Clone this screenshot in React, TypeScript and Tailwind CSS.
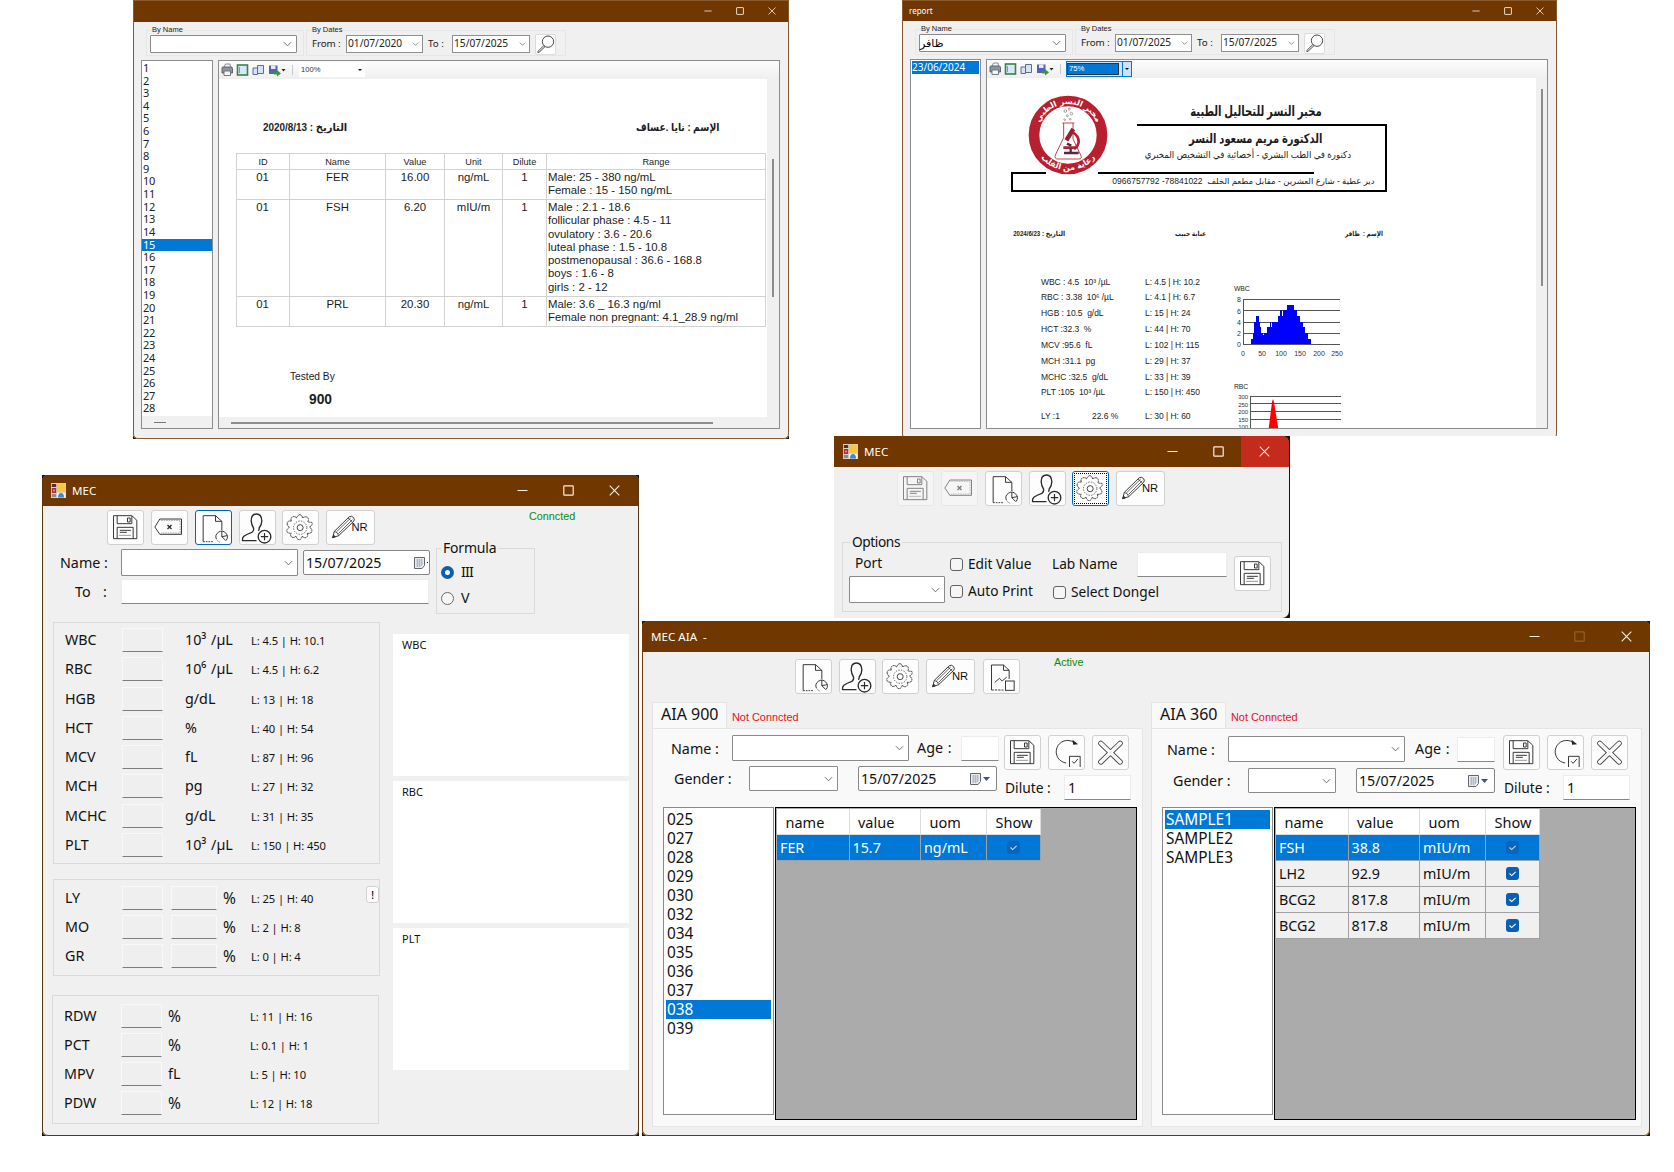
import type { ReactNode } from 'react';

const UI = "font-['Noto_Sans','DejaVu_Sans',sans-serif]";
const ARIAL = "font-['Liberation_Sans','DejaVu_Sans',sans-serif]";

/* ---------- window chrome ---------- */

function FormIcon() {
  return (
    <svg className="mr-[6px] h-[15px] w-[15px] shrink-0" viewBox="0 0 15 15">
      <rect x="0" y="0" width="15" height="15" fill="#d9d2c8" />
      <rect x="0.8" y="1" width="4.400" height="3" fill="#5a2f22" />
      <rect x="0.8" y="5" width="4.400" height="5" fill="#b3263a" />
      <path d="M3 6.500V8.500" stroke="#fff" strokeWidth="0.9" />
      <rect x="0.8" y="11" width="4.400" height="3" fill="#8b8b8b" />
      <rect x="6" y="0.5" width="8.500" height="8.500" fill="#f6c945" />
      <rect x="6" y="10" width="8.500" height="4.500" fill="#f1f1f1" />
      <path d="M7 14.500Q7 10 10 10Q13 10 13 14.500Z" fill="#3d86d8" />
    </svg>
  );
}

type BarProps = { title: string; small?: boolean; icon?: boolean; redClose?: boolean; dimMax?: boolean; height: string };

function TitleBar({ title, small, icon, redClose, dimMax, height }: BarProps) {
  const cell = small ? 'w-[32px]' : dimMax ? 'w-[45px]' : 'w-[46px]';
  const size = small ? 'h-[8px] w-[8px]' : 'h-[11px] w-[11px]';
  return (
    <div className={`flex shrink-0 items-center bg-[#703800] text-white ${height} ${UI}`}>
      <div className={`flex flex-1 items-center whitespace-pre ${small ? 'pl-[7px] text-[8px]' : 'pl-[9px] text-[11.6px]'}`}>
        {icon && <FormIcon />}
        <span>{title}</span>
      </div>
      <div className={`flex h-full items-center justify-center ${cell}`}>
        <svg className={size} viewBox="0 0 11 11">
          <path d="M0.5 5.5H10.5" stroke="#f6eee6" strokeWidth="1.1" />
        </svg>
      </div>
      <div className={`flex h-full items-center justify-center ${cell}`}>
        <svg className={size} viewBox="0 0 11 11">
          <rect x="0.8" y="0.8" width="9.4" height="9.4" rx="0.6" fill="none" stroke={dimMax ? '#93602f' : '#f6eee6'} strokeWidth="1.2" />
        </svg>
      </div>
      <div className={`flex h-full items-center justify-center ${small ? 'w-[33px] pr-px' : dimMax ? 'w-[48px]' : 'w-[48px] pl-px pr-[3px]'} ${redClose ? 'bg-[#c42b1c]' : ''}`}>
        <svg className={size} viewBox="0 0 11 11">
          <path d="M0.7 0.7L10.3 10.3M10.3 0.7L0.7 10.3" stroke="#f6eee6" strokeWidth="1.1" />
        </svg>
      </div>
    </div>
  );
}

/* ---------- controls ---------- */

function Chevron({ className = '' }: { className?: string }) {
  return (
    <svg className={`shrink-0 ${className}`} viewBox="0 0 10 6">
      <path d="M1 1L5 5L9 1" fill="none" stroke="#5c5c5c" strokeWidth="1" />
    </svg>
  );
}

function Combo({ className, children }: { className: string; children?: ReactNode }) {
  return (
    <div className={`flex shrink-0 items-center justify-between rounded-[1px] border border-[#8a8a8a] bg-white pr-[4px] ${className}`}>
      <span className="whitespace-nowrap">{children}</span>
      <Chevron className="h-[6px] w-[9px]" />
    </div>
  );
}

function SmallDate({ className, children }: { className: string; children: ReactNode }) {
  return (
    <div className={`flex h-[18px] shrink-0 items-center justify-between border border-[#8f8f8f] bg-white pl-px pr-[3px] text-[10.200px] ${className}`}>
      <span>{children}</span>
      <Chevron className="h-[4px] w-[7px]" />
    </div>
  );
}

function DateBox({ className, arrow = true }: { className: string; arrow?: boolean }) {
  return (
    <div className={`flex shrink-0 items-center rounded-[2px] border border-[#868686] bg-white pl-[2px] text-[14.2px] ${className}`}>
      <span className="flex-1">15/07/2025</span>
      <svg className="h-[12px] w-[11px]" viewBox="0 0 11 12">
        <path d="M0.5 0.5H10.5V8.5L8 11.5H0.5Z" fill="#e9ebf0" stroke="#62656e" />
        <path d="M2 3H9M2 5H9M2 7H9M2 9H7M3.5 2V10M5.5 2V10M7.5 2V9" stroke="#a5aab8" strokeWidth="0.7" />
      </svg>
      {arrow ? (
        <svg className="ml-[2px] mr-[6px] h-[4px] w-[7px]" viewBox="0 0 7 4">
          <path d="M0 0H7L3.5 4Z" fill="#3c5877" />
        </svg>
      ) : (
        <span className="ml-[2px] mr-px h-px w-px bg-black" />
      )}
    </div>
  );
}

function TextInput({ className, children }: { className: string; children?: ReactNode }) {
  return (
    <div className={`flex shrink-0 items-center border border-[#ececec] border-b-[#868686] bg-white ${className}`}>{children}</div>
  );
}

function CheckBox() {
  return <span className="h-[13px] w-[13px] shrink-0 rounded-[3px] border border-[#626262] bg-[#f6f6f6]" />;
}

type GlyphName = 'save' | 'back' | 'doc' | 'user' | 'gear' | 'pencil' | 'report' | 'redo' | 'close';

const gearPath =
  'M52 14 q7 1 8 10 q8 -6 15 -2 q5 6 1 13 q3 2 12 2 q4 8 -7 14 q10 7 6 16 q-8 5 -13 2 q4 8 -2 13 q-7 4 -13 -4 q-1 10 -9 11 q-8 -1 -9 -11 q-7 7 -14 3 q-5 -6 -1 -12 q-8 2 -12 -3 q-4 -8 7 -14 q-10 -7 -6 -16 q5 -5 12 -2 q-4 -8 2 -13 q7 -4 14 3 q2 -9 9 -10Z';

function Glyph({ name }: { name: GlyphName }) {
  switch (name) {
    case 'save':
      return (
        <g>
          <path d="M18 17H73L88 31V86H18Z" />
          <path d="M29 17V41H73V18M60 24H68V36H60ZM29 86V52H77V86" />
          <path d="M37 61H70M37 67H58" />
          <path d="M36 76H72" strokeDasharray="3 3" />
        </g>
      );
    case 'back':
      return (
        <g>
          <path d="M10 51L25 27H90V73H25Z" />
          <path d="M28 31H86V69H28" strokeDasharray="2 3" strokeWidth="2" />
          <path d="M48 45L60 57M60 45L48 57" strokeWidth="4" />
        </g>
      );
    case 'doc':
      return (
        <g>
          <path d="M23 95V17H60L79 34V60M60 17V34H79" />
          <path d="M23 95H54" strokeDasharray="5 3" />
          <path d="M63 88A17 17 0 1 1 92 91" />
          <path d="M79 63V80L91 92M79 80L95 77" />
          <path d="M66 92L72 96" strokeDasharray="3 2" />
        </g>
      );
    case 'user':
      return (
        <g strokeWidth="4">
          <path d="M56 62Q60 60 59 54Q67 44 67 32Q66 12 51 12Q35 12 35 32Q36 46 42 54Q44 63 37 67Q22 72 13 79Q8 84 9 92H51" />
          <circle cx="75" cy="80" r="19" />
          <path d="M75 69V91M64 80H86" strokeWidth="3.5" />
        </g>
      );
    case 'gear':
      return (
        <g strokeWidth="2.6">
          <path d={gearPath} strokeDasharray="6 1.5" />
          <circle cx="53" cy="53" r="20" strokeDasharray="4 4" strokeWidth="2.2" />
          <circle cx="53" cy="53" r="9" />
        </g>
      );
    case 'pencil':
      return (
        <g>
          <path d="M20 83L25 64L70 20Q77 16 83 23Q87 29 83 34L38 77Z" />
          <path d="M25 64Q35 66 38 77M31 66L74 24M37 71L79 29M66 24L80 37" strokeWidth="2.2" />
          <path d="M20 83L23 76L28 80Z" fill="#333" />
        </g>
      );
    case 'report':
      return (
        <g>
          <path d="M24 93V18H60L77 34V60M60 18V34H77" />
          <path d="M24 93H60" strokeDasharray="7 3" />
          <path d="M34 70L48 58L56 66L70 54" />
          <rect x="66" y="66" width="26" height="28" />
        </g>
      );
    case 'redo':
      return (
        <g>
          <path d="M53 84A34 34 0 1 1 76 22" />
          <path d="M72 14L89 28L74 29Z" fill="#222" stroke="none" />
          <path d="M63 96V64H95V96" />
          <path d="M71 79L77 85L88 72" />
        </g>
      );
    case 'close':
      return (
        <g>
          <path d="M25 25L83 81M83 25L25 81" stroke="#4a4a4a" strokeWidth="16" strokeLinecap="round" />
          <path d="M25 25L83 81M83 25L25 81" stroke="#fdfdfd" strokeWidth="10.5" strokeLinecap="round" />
          <path d="M27 27L81 79M81 27L27 79" stroke="#888" strokeWidth="1.2" strokeDasharray="2 4" />
        </g>
      );
  }
}

type ToolProps = { name: GlyphName; className?: string; focused?: boolean; active?: boolean; disabled?: boolean };

function Tool({ name, className = '', focused, active, disabled }: ToolProps) {
  const wide = name === 'pencil';
  const edge = focused || active ? 'border-[#0067b8]' : disabled ? 'border-[#e8e8e8]' : 'border-[#d0d0d0]';
  return (
    <div
      className={`relative h-[35px] shrink-0 overflow-hidden rounded-[3px] border ${edge} ${disabled ? 'bg-[#f5f5f5]' : 'bg-[#fdfdfd]'} ${wide ? 'w-[49px]' : 'w-[37px]'} ${className}`}
    >
      {focused && <span className="absolute inset-[1px] border border-dotted border-black" />}
      <svg
        className={`-ml-px -mt-px h-[35px] ${wide ? 'w-[49px]' : 'w-[37px]'} ${disabled ? 'opacity-60' : ''}`}
        viewBox={wide ? '0 0 147 105' : '0 0 108 105'}
        fill="none"
        stroke="#2b2b2b"
        strokeWidth="2.8"
      >
        <Glyph name={name} />
      </svg>
      {wide && <span className={`absolute left-[25px] top-[9px] text-[11.2px] leading-[15px] ${ARIAL}`}>NR</span>}
    </div>
  );
}

/* ---------- report windows ---------- */

function ViewerIcons() {
  return (
    <svg className="h-[14px] w-[68px] shrink-0" viewBox="0 0 68 14">
      <path d="M3 4L4.5 1H9L9.500 4" fill="#f4f6f8" stroke="#7d838c" strokeWidth="0.9" />
      <path d="M1 5Q1 4 2 4H10Q11.500 4 11.500 5.500V10H1Z" fill="#8f959e" stroke="#555b64" strokeWidth="0.9" />
      <path d="M3 8H9.500V12.500H3Z" fill="#f4f6f8" stroke="#666c75" strokeWidth="0.9" />
      <rect x="16.500" y="2" width="10" height="10" fill="#d5e8f7" stroke="#3f7d4e" strokeWidth="1.6" />
      <path d="M18.500 4V10" stroke="#8a9aa8" strokeWidth="1" />
      <path d="M32 5H36.500V11.500H32ZM36.500 2.500H42.500V10.500H36.500Z" fill="#d5e3f5" stroke="#5f6c8c" strokeWidth="1" />
      <path d="M48 2.500H56.500V11H48Z" fill="#5561b5" />
      <rect x="50" y="2.500" width="4.500" height="3.500" fill="#e6e9f8" />
      <path d="M53 9H56V7L60 10.500L56 13.500V11.500H53Z" fill="#2e9e3a" />
      <path d="M60.500 6H64.500L62.500 8.500Z" fill="#222" />
    </svg>
  );
}

type ReportProps = {
  place: string;
  title: string;
  bar: string;
  name: string;
  from: string;
  list: ReactNode;
  zoom: ReactNode;
  children: ReactNode;
};

function ReportWindow({ place, title, bar, name, from, list, zoom, children }: ReportProps) {
  return (
    <div className={`absolute overflow-hidden bg-[#1c1208] ${place}`}>
      <div className="flex h-[439px] flex-col overflow-hidden rounded-b-[5px] bg-[#f0f0f0] outline outline-1 -outline-offset-1 outline-[#8a5a30]">
        <TitleBar title={title} small height={bar} />
        <div className={`flex h-[38px] shrink-0 pl-[13px] pt-[4px] ${UI}`}>
          <fieldset className="h-[30px] w-[158px] shrink-0 border border-[#e6e6e6] pl-[3px]">
            <legend className={`ml-[2px] text-[7.5px] leading-[8px] text-[#222] ${ARIAL}`}>By Name</legend>
            <Combo className="mt-px h-[18px] w-[147px] text-[11px] leading-[14px]">{name}</Combo>
          </fieldset>
          <fieldset className="ml-[2px] h-[30px] w-[260px] shrink-0 border border-[#e6e6e6] pl-[5px]">
            <legend className={`text-[7.5px] leading-[8px] text-[#222] ${ARIAL}`}>By Dates</legend>
            <div className="mt-px flex h-[18px] items-center text-[9.8px] text-[#222]">
              <span className="w-[34px] shrink-0 tracking-[-0.1px]">From :</span>
              <SmallDate className="w-[77px]">{from}</SmallDate>
              <span className="ml-[5px] w-[24px] shrink-0">To :</span>
              <SmallDate className="w-[78px]">15/07/2025</SmallDate>
              <div className="ml-[5px] h-[21px] w-[21px] shrink-0 rounded-[2px] border border-[#dcdcdc] bg-[#fdfdfd]">
                <svg className="h-[19px] w-[19px]" viewBox="0 0 57 57" fill="none" stroke="#4a4a4a" strokeWidth="3">
                  <circle cx="36" cy="20" r="17" />
                  <path d="M24 31L6 49Q3 54 9 52L28 34" />
                </svg>
              </div>
            </div>
          </fieldset>
        </div>
        <div className="flex min-h-0 flex-1 pb-[10px] pl-[8px] pr-[9px]">
          {list}
          <div className="ml-[5px] flex min-w-0 flex-1 flex-col border border-[#8c8c8c] bg-[#f0f0f0]">
            <div className="flex h-[18px] shrink-0 items-center bg-gradient-to-b from-[#fcfcfc] to-[#efefef] pl-[2px]">
              <ViewerIcons />
              <span className="ml-[3px] h-[10px] w-px bg-[#c9c9c9]" />
              {zoom}
            </div>
            {children}
          </div>
        </div>
      </div>
    </div>
  );
}

const results = [
  { name: 'FER', value: '16.00', unit: 'ng/mL', h: 'h-[30px]', range: ['Male: 25 - 380 ng/mL', 'Female : 15 - 150 ng/mL'] },
  {
    name: 'FSH',
    value: '6.20',
    unit: 'mIU/m',
    h: 'h-[97px]',
    range: [
      'Male : 2.1 - 18.6',
      'follicular phase : 4.5 - 11',
      'ovulatory : 3.6 - 20.6',
      'luteal phase : 1.5 - 10.8',
      'postmenopausal : 36.6 - 168.8',
      'boys : 1.6 - 8',
      'girls : 2 - 12',
    ],
  },
  { name: 'PRL', value: '20.30', unit: 'ng/mL', h: 'h-[30px]', range: ['Male: 3.6 _ 16.3 ng/ml', 'Female non pregnant: 4.1_28.9 ng/ml'] },
];

const tableCols = 'grid grid-cols-[53px_96px_59px_58px_44px_219px]';
const tableCell = 'border-r border-[#d2d2d2] text-center';

function HormoneReport() {
  return (
    <div className={`flex min-h-0 flex-1 ${ARIAL}`}>
      <div className="flex min-w-0 flex-1 flex-col">
        <div className="h-[338px] bg-white pl-[17px] text-[#1c1c1c]">
          <div className="flex h-[74px] items-center justify-between pl-[27px] pr-[48px] pt-[23px] text-[11px] font-bold">
            <span dir="rtl" className="origin-left scale-x-[0.9] whitespace-nowrap">التاريخ : 2020/8/13</span>
            <span dir="rtl" className="origin-right scale-x-[0.84] whitespace-nowrap">الإسم : نايا .عساف</span>
          </div>
          <div className="w-[530px] border-l border-t border-[#d2d2d2]">
            <div className={`${tableCols} h-[16px] border-b border-[#d2d2d2] text-[9.2px] leading-[16px]`}>
              {['ID', 'Name', 'Value', 'Unit', 'Dilute', 'Range'].map((h) => (
                <div key={h} className={tableCell}>{h}</div>
              ))}
            </div>
            {results.map((r) => (
              <div key={r.name} className={`${tableCols} ${r.h} border-b border-[#d2d2d2] text-[11.400px] leading-[13.300px]`}>
                <div className={`${tableCell} -ml-px pt-px`}>01</div>
                <div className={`${tableCell} pt-px`}>{r.name}</div>
                <div className={`${tableCell} pt-px`}>{r.value}</div>
                <div className={`${tableCell} pt-px`}>{r.unit}</div>
                <div className={`${tableCell} pt-px`}>1</div>
                <div className="whitespace-nowrap border-r border-[#d2d2d2] pl-px pt-px">
                  {r.range.map((line) => (
                    <div key={line}>{line}</div>
                  ))}
                </div>
              </div>
            ))}
          </div>
          <div className="ml-[54px] mt-[43px] text-[10.200px] leading-[14px]">Tested By</div>
          <div className="ml-[73px] mt-[8px] text-[13.800px] font-bold leading-[16px]">900</div>
        </div>
        <div className="flex flex-1 items-center pl-[12px]">
          <span className="h-[2px] w-[482px] bg-[#8c8c8c]" />
        </div>
      </div>
      <div className="w-[12px] shrink-0 pl-[5px] pt-[80px]">
        <div className="h-[138px] w-[2px] bg-[#8c8c8c]" />
      </div>
    </div>
  );
}

function Logo() {
  return (
    <svg className="h-[80px] w-[80px] shrink-0" viewBox="0 0 240 240">
      <defs>
        <path id="ringTop" d="M27 120A93 93 0 0 1 213 120" />
        <path id="ringBottom" d="M14 120A106 106 0 0 0 226 120" />
      </defs>
      <circle cx="120" cy="120" r="102" fill="#fff" stroke="#b8202f" strokeWidth="32" />
      <text className="font-['DejaVu_Sans']" fontSize="24" fontWeight="bold" fill="#fff" textAnchor="middle">
        <textPath href="#ringTop" startOffset="50%">مخبر النسر الطبي</textPath>
      </text>
      <text className="font-['DejaVu_Sans']" fontSize="24" fontWeight="bold" fill="#fff" textAnchor="middle">
        <textPath href="#ringBottom" startOffset="50%">رعاية من القلب</textPath>
      </text>
      <path d="M103 84H139M107 84V128L82 180Q78 192 90 192H152Q164 192 158 180L135 132V84" fill="none" stroke="#c9404c" strokeWidth="3" />
      <g fill="none" stroke="#777" strokeWidth="2">
        <circle cx="112" cy="48" r="4" />
        <circle cx="124" cy="42" r="3" />
        <circle cx="130" cy="56" r="4" />
        <circle cx="118" cy="62" r="3" />
        <circle cx="110" cy="74" r="2.500" />
        <circle cx="127" cy="73" r="2.500" />
      </g>
      <path d="M115 136L136 102" stroke="#8f2430" strokeWidth="13" />
      <path d="M134 112Q152 122 152 140Q151 154 138 162M106 158H142" fill="none" stroke="#b8202f" strokeWidth="8" />
      <path d="M117 146L130 152M108 174H152M128 160V174" fill="none" stroke="#4d2f44" strokeWidth="7" />
    </svg>
  );
}

const cbc: [string, string][] = [
  ['WBC : 4.5  10³ /µL', 'L: 4.5 | H: 10.2'],
  ['RBC : 3.38  10⁶ /µL', 'L: 4.1 | H: 6.7'],
  ['HGB : 10.5  g/dL', 'L: 15 | H: 24'],
  ['HCT :32.3  %', 'L: 44 | H: 70'],
  ['MCV :95.6  fL', 'L: 102 | H: 115'],
  ['MCH :31.1  pg', 'L: 29 | H: 37'],
  ['MCHC :32.5  g/dL', 'L: 33 | H: 39'],
  ['PLT :105  10³ /µL', 'L: 150 | H: 450'],
];

function WbcChart() {
  return (
    <svg className="h-[74px] w-[120px]" viewBox="0 0 120 74">
      <g stroke="#555" strokeWidth="1">
        {[9.5, 20.5, 32.5, 43.5].map((y) => (
          <path key={y} d={`M10 ${y}H107`} />
        ))}
        <path d="M10.500 9V55M10 54.500H107" />
      </g>
      <path
        d="M18 54V49H20V43H21V32H23V26H25V26H26V32H27V37H28V43H30V45H31V43H34V37H37V32H38V37H39V32H45V26H47V20H49V26H50V20H54V15H61V20H64V26H67V32H70V37H72V43H75V49H78V54Z"
        fill="#00f"
      />
      <g className="font-['Liberation_Sans']" fontSize="7" fill="#333" textAnchor="middle">
        <text x="6" y="12">8</text>
        <text x="6" y="23.500">6</text>
        <text x="6" y="35">4</text>
        <text x="6" y="46">2</text>
        <text x="6" y="57">0</text>
        <text x="10" y="65.500">0</text>
        <text x="29" y="65.500">50</text>
        <text x="48" y="65.500">100</text>
        <text x="67" y="65.500">150</text>
        <text x="86" y="65.500">200</text>
        <text x="104" y="65.500">250</text>
      </g>
    </svg>
  );
}

function RbcChart() {
  return (
    <svg className="-mt-px h-[40px] w-[120px]" viewBox="0 0 120 40">
      <g stroke="#555" strokeWidth="1">
        {[6.5, 13.500, 21.500, 29.500].map((y) => (
          <path key={y} d={`M17 ${y}H108`} />
        ))}
        <path d="M17.500 6V40" />
      </g>
      <path d="M35.500 40L39 12L40 9L41 12L45.500 40Z" fill="#f00" />
      <g className="font-['Liberation_Sans']" fontSize="6" fill="#333" textAnchor="end">
        <text x="15" y="9">300</text>
        <text x="15" y="16.500">250</text>
        <text x="15" y="24">200</text>
        <text x="15" y="32">150</text>
        <text x="15" y="39">100</text>
      </g>
    </svg>
  );
}

function BloodReport() {
  return (
    <div className={`flex min-h-0 flex-1 overflow-hidden ${ARIAL}`}>
      <div className="min-w-0 flex-1 overflow-hidden bg-white pl-px text-[#1c1c1c]">
        <div className="relative h-[113px]">
          <div className="ml-[22.500px] flex h-[113px] w-[376px] pt-[16px]">
            <div className="h-full w-full">
              <div dir="rtl" className="h-[30px] pr-[65px] pt-[7px] text-[14px] font-bold leading-[20px]">
                <span className="inline-block origin-right scale-x-[0.72] whitespace-nowrap">مخبر النسر للتحاليل الطبية</span>
              </div>
              <div className="ml-[126px] h-[48px] border-r-2 border-t-2 border-black">
                <div dir="rtl" className="whitespace-nowrap pr-[62px] pt-[4px] text-[13px] font-bold leading-[18px]">
                  <span className="inline-block origin-right scale-x-[0.765]">الدكتورة مريم مسعود النسر</span>
                </div>
                <div dir="rtl" className="whitespace-nowrap pr-[34px] text-[9.500px] leading-[14px]">
                  <span className="inline-block origin-right scale-x-[0.905]">دكتورة في الطب البشري - أخصائية في التشخيص المخبري</span>
                </div>
              </div>
              <div className="flex h-[2px] border-r-2 border-black">
                <span className="w-[35px] bg-black" />
                <span className="ml-[52px] w-[216px] bg-black" />
              </div>
              <div
                dir="rtl"
                className="h-[18px] whitespace-nowrap border-x-2 border-b-2 border-black pr-[10px] text-[8.500px] leading-[14px]"
              >
                دير عطية - شارع العشرين - مقابل مطعم الخلف&nbsp; 78841022- 0966757792
              </div>
            </div>
          </div>
          <div className="absolute left-[40px] top-[17px]">
            <Logo />
          </div>
        </div>
        <div className="mt-[35px] flex h-[16px] items-center text-[7px] font-bold">
          <span dir="rtl" className="ml-[24px] w-[53px] origin-right scale-x-[0.87] whitespace-nowrap">التاريخ : 2024/6/23</span>
          <span dir="rtl" className="ml-[109px] w-[32px] origin-right scale-x-[0.83] whitespace-nowrap">عناية حبيب</span>
          <span dir="rtl" className="ml-[139px] w-[38px] origin-right scale-x-[0.82] whitespace-pre">الإسم :  ظافر</span>
        </div>
        <div className="mt-[31px] flex text-[8.500px] tracking-[-0.05px]">
          <div className="ml-[53px] mt-px w-[190px] shrink-0">
            {cbc.map(([value, range]) => (
              <div key={value} className="flex h-[15.850px] items-center whitespace-pre">
                <span className="w-[104px]">{value}</span>
                <span>{range}</span>
              </div>
            ))}
            <div className="mt-[8px] flex h-[16px] items-center">
              <span className="w-[51px]">LY :1</span>
              <span className="w-[53px]">22.6 %</span>
              <span>L: 30 | H: 60</span>
            </div>
          </div>
          <div className="ml-[2px] mt-[12px]">
            <div className="pl-[1px] text-[6.800px] leading-[8px]">WBC</div>
            <div className="-mt-[3px]">
              <WbcChart />
            </div>
            <div className="mt-[19px] pl-[1px] text-[6.800px] leading-[8px]">RBC</div>
            <RbcChart />
          </div>
        </div>
      </div>
      <div className="w-[11px] shrink-0 pl-[5px] pt-[11px]">
        <div className="h-[197px] w-[2px] bg-[#8c8c8c]" />
      </div>
    </div>
  );
}

/* ---------- hematology window ---------- */

function ReadOnly({ className }: { className: string }) {
  return (
    <span className={`h-[24px] shrink-0 border border-[#f8f8f8] border-b-[#7d7d7d] bg-[#efefef] ${className}`} />
  );
}

const group1 = [
  ['WBC', '10³ /µL', 'L: 4.5 | H: 10.1'],
  ['RBC', '10⁶ /µL', 'L: 4.5 | H: 6.2'],
  ['HGB', 'g/dL', 'L: 13 | H: 18'],
  ['HCT', '%', 'L: 40 | H: 54'],
  ['MCV', 'fL', 'L: 87 | H: 96'],
  ['MCH', 'pg', 'L: 27 | H: 32'],
  ['MCHC', 'g/dL', 'L: 31 | H: 35'],
  ['PLT', '10³ /µL', 'L: 150 | H: 450'],
];
const group2 = [
  ['LY', 'L: 25 | H: 40'],
  ['MO', 'L: 2 | H: 8'],
  ['GR', 'L: 0 | H: 4'],
];
const group3 = [
  ['RDW', '%', 'L: 11 | H: 16'],
  ['PCT', '%', 'L: 0.1 | H: 1'],
  ['MPV', 'fL', 'L: 5 | H: 10'],
  ['PDW', '%', 'L: 12 | H: 18'],
];

const rangeText = 'whitespace-nowrap pt-[2px] text-[11.200px] tracking-[-0.1px]';

function HematologyWindow() {
  return (
    <div className="absolute left-[42px] top-[475px] h-[661px] w-[597px] overflow-hidden bg-[#1c1208]">
      <div className={`flex h-full flex-col overflow-hidden rounded-[6px] bg-[#f0f0f0] text-[14.300px] leading-[20px] text-[#111] outline outline-1 -outline-offset-1 outline-[#5a3510] ${UI}`}>
        <TitleBar title="MEC" icon height="h-[31px]" />
        <div className="flex h-[116px] shrink-0">
          <div className="w-[394px] shrink-0 pt-[4px]">
            <div className="flex pl-[64.500px]">
              <Tool name="save" />
              <Tool name="back" className="ml-[7px]" />
              <Tool name="doc" active className="ml-[7px]" />
              <Tool name="user" className="ml-[7px]" />
              <Tool name="gear" className="ml-[6px]" />
              <Tool name="pencil" className="ml-[7px]" />
            </div>
            <div className="mt-[4px] flex h-[27px] items-center">
              <span className="ml-[18px] w-[61px] whitespace-nowrap pt-px">Name :</span>
              <Combo className="h-[27px] w-[177px]" />
              <DateBox arrow={false} className="ml-[5px] h-[25px] w-[127px]" />
            </div>
            <div className="mt-[3px] flex h-[25px] items-center">
              <span className="ml-[33px] w-[46px] whitespace-pre [word-spacing:2.5px]">To  :</span>
              <TextInput className="h-[25px] w-[308px]" />
            </div>
          </div>
          <div className="pt-[2px]">
            <div className={`ml-[93px] h-[16px] text-[10.800px] leading-[16px] text-[#0a8a0a] ${ARIAL}`}>Conncted</div>
            <fieldset className="mt-[14px] h-[76px] w-[99px] border border-[#dadada] pl-[4px]">
              <legend className="px-[2px] text-[14px] leading-[20px] tracking-[-0.200px]">Formula</legend>
              <div className="mt-[4px] flex h-[20px] items-center">
                <span className="h-[13px] w-[13px] rounded-full border-4 border-[#0a5fb4] bg-white" />
                <span className="ml-[7px] pb-[1px] tracking-[-0.800px]">III</span>
              </div>
              <div className="mt-[6px] flex h-[20px] items-center">
                <span className="h-[13px] w-[13px] rounded-full border border-[#6b6b6b] bg-[#f6f6f6]" />
                <span className="ml-[7px]">V</span>
              </div>
            </fieldset>
          </div>
        </div>
        <div className="flex">
          <div className="w-[351px] shrink-0 pl-[11px]">
            <div className="h-[242px] w-[327px] border border-[#dadada] pt-[2.500px]">
              {group1.map(([n, u, r]) => (
                <div key={n} className="flex h-[29.250px] items-center">
                  <span className="ml-[11px] w-[57px] shrink-0">{n}</span>
                  <ReadOnly className="w-[41px]" />
                  <span className="ml-[22px] w-[66px] shrink-0 whitespace-nowrap [word-spacing:1px]">{u}</span>
                  <span className={rangeText}>{r}</span>
                </div>
              ))}
            </div>
            <div className="relative mt-[15px] h-[97px] w-[327px] border border-[#dadada] pt-[3px]">
              {group2.map(([n, r]) => (
                <div key={n} className="flex h-[29px] items-center">
                  <span className="ml-[11px] w-[57px] shrink-0">{n}</span>
                  <ReadOnly className="w-[41px]" />
                  <ReadOnly className="ml-[8px] w-[46px]" />
                  <span className="ml-[6px] w-[28px] shrink-0 text-[15.500px]">%</span>
                  <span className={rangeText}>{r}</span>
                </div>
              ))}
              <span className="absolute right-0 top-[6px] flex h-[17px] w-[13px] items-center justify-center rounded-[3px] border border-[#cfcfcf] bg-[#fdfdfd] text-[10px] font-medium text-black">
                !
              </span>
            </div>
            <div className="-ml-px mt-[19px] h-[129px] w-[327px] border border-[#dadada] pt-[5px]">
              {group3.map(([n, u, r]) => (
                <div key={n} className="flex h-[29.200px] items-center">
                  <span className="ml-[11px] w-[57px] shrink-0">{n}</span>
                  <ReadOnly className="w-[41px]" />
                  <span className={`ml-[6px] w-[82px] shrink-0 ${u === '%' ? 'text-[15.500px]' : ''}`}>{u}</span>
                  <span className={rangeText}>{r}</span>
                </div>
              ))}
            </div>
          </div>
          <div className="flex w-[236px] flex-col gap-[5px] pt-[12px]">
            {['WBC', 'RBC', 'PLT'].map((n) => (
              <div key={n} className="h-[142px] bg-white pl-[9px] pt-[3px] text-[11px] leading-[16px]">{n}</div>
            ))}
          </div>
        </div>
      </div>
    </div>
  );
}

/* ---------- options window ---------- */

function OptionsWindow() {
  return (
    <div className="absolute left-[834px] top-[436px] h-[182px] w-[456px] overflow-hidden bg-[#1c1208]">
      <div className={`flex h-full w-[455px] flex-col overflow-hidden rounded-r-[7px] bg-[#f0f0f0] text-[13.700px] leading-[20px] text-[#111] ${UI}`}>
        <TitleBar title="MEC" icon redClose height="h-[31px]" />
        <div className="flex pl-[63px] pt-[4px]">
          <Tool name="save" disabled />
          <Tool name="back" disabled className="ml-[7px]" />
          <Tool name="doc" className="ml-[7px]" />
          <Tool name="user" className="ml-[7px]" />
          <Tool name="gear" focused className="ml-[6px]" />
          <Tool name="pencil" className="ml-[7px]" />
        </div>
        <fieldset className="ml-[8px] mt-[26px] h-[80px] w-[440px] border border-[#dadada]">
          <legend className="ml-[7px] px-[2px] tracking-[-0.400px]">Options</legend>
          <div className="flex">
            <div className="ml-[6px] w-[96px]">
              <div className="h-[24px] pl-[6px] pt-px">Port</div>
              <Combo className="h-[27px] w-[96px]" />
            </div>
            <div className="ml-[5px] w-[102px] whitespace-nowrap">
              <div className="flex h-[24px] items-center gap-[5px]">
                <CheckBox />
                Edit Value
              </div>
              <div className="mt-[3px] flex h-[24px] items-center gap-[5px]">
                <CheckBox />
                Auto Print
              </div>
            </div>
            <div className="w-[182px] whitespace-nowrap">
              <div className="flex h-[24px] items-center">
                <span className="w-[85px]">Lab Name</span>
                <TextInput className="h-[25px] w-[90px]" />
              </div>
              <div className="mt-[4px] flex h-[24px] items-center gap-[5px] pl-px">
                <CheckBox />
                Select Dongel
              </div>
            </div>
            <Tool name="save" className="mt-[4px]" />
          </div>
        </fieldset>
      </div>
    </div>
  );
}

/* ---------- AIA window ---------- */

type Row = [string, string, string];
type PanelProps = {
  tab: string;
  tabClass: string;
  nameRow: string;
  nameGap: string;
  ageLabel: string;
  ageGap: string;
  genderRow: string;
  genderGap: string;
  dateGap: string;
  side: string;
  bodyClass: string;
  items: string[];
  selected: string;
  rows: Row[];
};

function Tick({ muted }: { muted?: boolean }) {
  return (
    <svg className="h-[13px] w-[13px]" viewBox="0 0 13 13">
      <rect width="13" height="13" rx="3" fill={muted ? '#0a66bd' : '#0a5fb4'} />
      <path d="M3.500 6.500L5.700 8.600L9.600 4.800" fill="none" stroke={muted ? '#b9dcf8' : '#fff'} strokeWidth="1.100" />
    </svg>
  );
}

function AnalyzerPanel(p: PanelProps) {
  return (
    <div className="flex w-[491px] shrink-0 flex-col">
      <div className="flex h-[26px] shrink-0 items-end">
        <div className={`-mb-px flex h-[27px] items-center border border-b-0 border-[#e5e5e5] bg-[#f9f9f9] pb-[4px] pl-[8px] text-[16px] ${p.tabClass}`}>{p.tab}</div>
        <span className={`pb-[2px] pl-[5px] text-[10.900px] leading-[18px] text-[#e8101c] ${ARIAL}`}>Not Conncted</span>
      </div>
      <div className="h-[399px] border border-[#e5e5e5] bg-[#f9f9f9]">
        <div className="flex h-[78px]">
          <div className={`shrink-0 ${p.side}`}>
            <div className={`flex h-[26px] items-center ${p.nameRow}`}>
              <span className="w-[61px] shrink-0 pt-[2px]">Name :</span>
              <Combo className={`h-[26px] ${p.nameGap}`} />
              <span className={`shrink-0 whitespace-nowrap [word-spacing:1px] ${p.ageLabel}`}>Age :</span>
              <TextInput className={`h-[25px] ${p.ageGap}`} />
            </div>
            <div className={`flex h-[25px] items-center ${p.genderRow}`}>
              <span className="w-[75px] shrink-0">Gender :</span>
              <Combo className={`h-[25px] ${p.genderGap}`} />
              <DateBox className={`h-[25px] ${p.dateGap}`} />
            </div>
          </div>
          <div className="pt-[6px]">
            <div className="flex gap-[7px]">
              <Tool name="save" />
              <Tool name="redo" />
              <Tool name="close" />
            </div>
            <div className="mt-[5px] flex h-[25px] items-center">
              <span className="w-[60px] whitespace-nowrap pl-px text-[13.800px]">Dilute :</span>
              <TextInput className="h-[25px] w-[67px] pl-[3px]">1</TextInput>
            </div>
          </div>
        </div>
        <div className={`flex ${p.bodyClass}`}>
          <div className="h-[308px] w-[111px] shrink-0 border border-[#8a8a8a] bg-white p-[2px] text-[15.400px] leading-[19px]">
            {p.items.map((it) => (
              <div key={it} className={`h-[19px] pl-[1px] ${it === p.selected ? 'bg-[#0078d7] text-white' : ''}`}>{it}</div>
            ))}
          </div>
          <div className="ml-px h-[313px] w-[362px] shrink-0 border border-black bg-[#ababab] p-px">
            <div className="grid w-[265px] grid-cols-[72.500px_71.500px_66px_54px]">
              {['name', 'value', 'uom', 'Show'].map((h) => (
                <div key={h} className="h-[26px] border-b border-r border-[#dcdcdc] bg-white pl-[8.500px] pt-[3px] text-[14.500px]">{h}</div>
              ))}
              {p.rows.flatMap((r, i) => {
                const tone = i === 0 ? 'bg-[#0078d7] text-white' : 'bg-[#f0f0f0]';
                return [
                  ...r.map((c, j) => (
                    <div key={`${i}-${j}`} className={`h-[26px] border-b border-r border-[#a0a0a0] pl-[3px] pt-[2.500px] ${tone}`}>{c}</div>
                  )),
                  <div key={`${i}-t`} className={`flex h-[26px] items-center justify-center border-b border-r border-[#a0a0a0] ${tone}`}>
                    <Tick muted={i === 0} />
                  </div>,
                ];
              })}
            </div>
          </div>
        </div>
      </div>
    </div>
  );
}

function AnalyzerWindow() {
  return (
    <div className="absolute left-[642px] top-[621px] h-[515px] w-[1008px] overflow-hidden bg-[#1c1208]">
      <div className={`flex h-full flex-col overflow-hidden rounded-[6px] bg-[#f0f0f0] text-[14.300px] leading-[20px] text-[#111] outline outline-1 -outline-offset-1 outline-[#703800] ${UI}`}>
        <TitleBar title="MEC AIA  -" dimMax height="h-[31px]" />
        <div className="flex h-[50px] shrink-0 pl-[153px] pt-[7px]">
          <Tool name="doc" />
          <Tool name="user" className="ml-[7px]" />
          <Tool name="gear" className="ml-[6px]" />
          <Tool name="pencil" className="ml-[7px]" />
          <Tool name="report" className="ml-[8px]" />
          <span className={`ml-[34px] mt-[-5px] text-[10.800px] leading-[16px] text-[#0a8a0a] ${ARIAL}`}>Active</span>
        </div>
        <div className="flex gap-[8px] pl-[10px]">
          <AnalyzerPanel
            tab="AIA 900"
            tabClass="w-[75px]"
            side="w-[351px]"
            nameRow="mt-[6px] pl-[18px]"
            nameGap="w-[177px]"
            ageLabel="ml-[8px] w-[44px]"
            ageGap="w-[38px]"
            genderRow="mt-[5px] pl-[21px]"
            genderGap="w-[89px]"
            dateGap="ml-[20px] w-[139px]"
            bodyClass="pl-[10px]"
            items={['025', '027', '028', '029', '030', '032', '034', '035', '036', '037', '038', '039']}
            selected="038"
            rows={[['FER', '15.7', 'ng/mL']]}
          />
          <AnalyzerPanel
            tab="AIA 360"
            tabClass="w-[75px]"
            side="w-[351px]"
            nameRow="mt-[7px] pl-[15px]"
            nameGap="w-[177px]"
            ageLabel="ml-[10px] w-[42px]"
            ageGap="w-[38px]"
            genderRow="mt-[6px] pl-[21px]"
            genderGap="w-[88px]"
            dateGap="ml-[20px] w-[139px]"
            bodyClass="pl-[10px]"
            items={['SAMPLE1', 'SAMPLE2', 'SAMPLE3']}
            selected="SAMPLE1"
            rows={[
              ['FSH', '38.8', 'mIU/m'],
              ['LH2', '92.9', 'mIU/m'],
              ['BCG2', '817.8', 'mIU/m'],
              ['BCG2', '817.8', 'mIU/m'],
            ]}
          />
        </div>
      </div>
    </div>
  );
}

/* ---------- desktop ---------- */

export default function App() {
  const numbers = Array.from({ length: 28 }, (_, i) => i + 1);
  return (
    <div className="relative h-[1172px] w-[1674px] overflow-hidden bg-white">
      <ReportWindow
        place="left-[133px] top-0 h-[439px] w-[656px]"
        title=""
        bar="h-[22px]"
        name=""
        from="01/07/2020"
        list={
          <div className={`flex w-[72px] shrink-0 flex-col border border-[#8c8c8c] bg-white text-[11px] leading-[12.600px] text-[#222] ${UI}`}>
            <div className="h-[355px] pt-px">
              {numbers.map((n) => (
                <div key={n} className={`h-[12.620px] pl-[1px] tracking-[-0.300px] ${n === 15 ? 'bg-[#0078d7] text-white' : ''}`}>{n}</div>
              ))}
            </div>
            <div className="flex flex-1 items-center bg-[#f0f0f0] pl-[12px]">
              <span className="h-px w-[12px] bg-[#777]" />
            </div>
          </div>
        }
        zoom={
          <div className={`ml-[6px] flex h-[14px] w-[66px] items-center justify-between bg-white pl-[2px] pr-[3px] text-[7.600px] text-[#333] ${ARIAL}`}>
            100%
            <svg className="h-[2px] w-[4px]" viewBox="0 0 4 2">
              <path d="M0 0H4L2 2Z" fill="#111" />
            </svg>
          </div>
        }
      >
        <HormoneReport />
      </ReportWindow>

      <ReportWindow
        place="left-[902px] top-0 h-[436px] w-[655px]"
        title="report"
        bar="h-[21px]"
        name="ظافر"
        from="01/07/2025"
        list={
          <div className={`w-[71px] shrink-0 border border-[#8c8c8c] bg-white p-px text-[10px] leading-[13px] ${UI}`}>
            <div className="bg-[#0078d7] text-white">23/06/2024</div>
          </div>
        }
        zoom={
          <div className={`ml-[5px] flex h-[16px] w-[66px] items-center border border-[#0078d7] bg-[#cce4f7] text-[7.700px] text-white ${ARIAL}`}>
            <span className="flex h-[12px] w-[52px] items-center border border-[#333] bg-[#0078d7] pl-[1px]">75%</span>
            <span className="ml-[3px] flex h-full flex-1 items-center justify-center border-l border-[#0078d7]">
              <svg className="h-[2px] w-[4px]" viewBox="0 0 4 2">
                <path d="M0 0H4L2 2Z" fill="#111" />
              </svg>
            </span>
          </div>
        }
      >
        <BloodReport />
      </ReportWindow>

      <OptionsWindow />
      <HematologyWindow />
      <AnalyzerWindow />
    </div>
  );
}
